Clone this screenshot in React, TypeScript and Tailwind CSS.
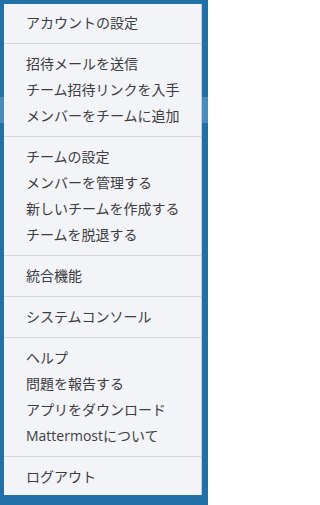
const SECTIONS: string[][] = [
  ["アカウントの設定"],
  ["招待メールを送信", "チーム招待リンクを入手", "メンバーをチームに追加"],
  ["チームの設定", "メンバーを管理する", "新しいチームを作成する", "チームを脱退する"],
  ["統合機能"],
  ["システムコンソール"],
  ["ヘルプ", "問題を報告する", "アプリをダウンロード", "Mattermostについて"],
  ["ログアウト"],
];

export default function App() {
  return (
    <div className="relative h-[505px] w-[208px] overflow-hidden bg-[#2170a8] font-['Open_Sans','Noto_Sans_CJK_JP',sans-serif]">
      {/* lighter row of the page behind the menu */}
      <div className="mt-[97px] h-[26px] w-full bg-[#4a8bbd]" />

      <div className="absolute top-[4px] left-[4px] w-[198px] border-r border-[#c9ccd3] bg-[#f2f4f8] pt-[6px] pb-[5px] text-[14px] text-[#3d3c40]">
        {SECTIONS.map((items, i) => (
          <div key={i}>
            {i > 0 ? <div className="my-[7px] h-px bg-[#d4d6dc]" /> : null}
            {items.map((label) => (
              <div key={label} className="flex h-[26px] items-center pl-[22px] leading-none whitespace-nowrap">
                {label}
              </div>
            ))}
          </div>
        ))}
      </div>
    </div>
  );
}
